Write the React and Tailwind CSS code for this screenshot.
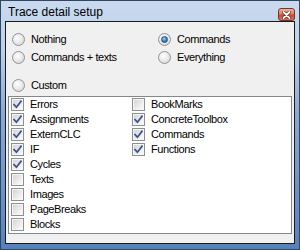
import React from "react";

const font = { fontFamily: '"Liberation Sans", Arial, sans-serif' };

function Check({ checked }) {
  return (
    <span className="w-[13px] h-[13px] shrink-0 border border-[#8e8f8f] bg-white flex items-center justify-center">
      <span className="w-[11px] h-[11px] border border-[#f6f6f6] bg-[linear-gradient(135deg,#d4d4d4_0%,#ececec_60%,#fafafa_100%)] flex items-center justify-center">
        {checked && (
          <svg width="9" height="9" viewBox="0 0 9 9">
            <path d="M1 4.6 L3.4 7.2 L8 1.3" fill="none" stroke="#3c5390" strokeWidth="1.7" strokeLinecap="square" />
          </svg>
        )}
      </span>
    </span>
  );
}

function Radio({ checked }) {
  return (
    <span className="w-[13px] h-[13px] shrink-0 rounded-full border border-[#929292] bg-[radial-gradient(circle_at_40%_35%,#ffffff_0%,#e9e9e9_50%,#cfcfcf_100%)] flex items-center justify-center">
      {checked && (
        <span className="w-[7px] h-[7px] rounded-full border border-[#254f7e] bg-[radial-gradient(circle_at_40%_35%,#a7d6f7_0%,#3a86c8_50%,#1a4f86_100%)]" />
      )}
    </span>
  );
}

function RadioItem({ label, checked }) {
  return (
    <div className="h-[18px] flex items-center gap-[6px]">
      <Radio checked={checked} />
      <span className="text-[11px] tracking-[-0.4px] text-black leading-none">{label}</span>
    </div>
  );
}

function CheckItem({ label, checked }) {
  return (
    <div className="h-[15px] flex items-center gap-[6px]">
      <Check checked={checked} />
      <span className="text-[11px] tracking-[-0.4px] text-black leading-none">{label}</span>
    </div>
  );
}

export default function App() {
  const col1 = [
    ["Errors", true],
    ["Assignments", true],
    ["ExternCLC", true],
    ["IF", true],
    ["Cycles", true],
    ["Texts", false],
    ["Images", false],
    ["PageBreaks", false],
    ["Blocks", false],
  ];
  const col2 = [
    ["BookMarks", false],
    ["ConcreteToolbox", true],
    ["Commands", true],
    ["Functions", true],
  ];
  return (
    <div
      style={font}
      className="w-[300px] h-[250px] border border-[#33465e] px-[4px] pb-[5px] flex flex-col bg-[linear-gradient(to_bottom,#c9daf0_0%,#bcd0ea_20%,#8aaad6_45%,#5582bc_100%)]"
    >
      <div className="h-[20px] flex items-start justify-between shrink-0">
        <span className="pl-[3px] pt-[4px] text-[12px] leading-[14px] text-black">Trace detail setup</span>
        <div className="mt-[7px] w-[17px] h-[13px] rounded-[3px] border border-[#7d3324] bg-[linear-gradient(to_bottom,#eab3a3_0%,#d9806b_45%,#c5492f_55%,#d8725a_100%)] flex items-center justify-center">
          <svg width="9" height="8" viewBox="0 0 9 8">
            <path d="M1.5 1 L7.5 7 M7.5 1 L1.5 7" stroke="#5a2318" strokeWidth="3.2" strokeLinecap="round" />
            <path d="M1.5 1 L7.5 7 M7.5 1 L1.5 7" stroke="#ffffff" strokeWidth="1.8" strokeLinecap="round" />
          </svg>
        </div>
      </div>
      <div className="flex-1 border border-[#1a1a1a] bg-[#f0f0f0] flex flex-col">
        <div className="h-[74px] shrink-0 pt-[8px] pl-[6px]">
          <div className="flex">
            <div className="w-[146px] flex flex-col">
              <RadioItem label="Nothing" />
              <RadioItem label="Commands + texts" />
            </div>
            <div className="flex flex-col">
              <RadioItem label="Commands" checked />
              <RadioItem label="Everything" />
            </div>
          </div>
          <div className="mt-[10px]">
            <RadioItem label="Custom" />
          </div>
        </div>
        <div className="h-[138px] shrink-0 mx-[2px] border border-[#828790] bg-white flex pl-[2px]">
          <div className="w-[121px] flex flex-col">
            {col1.map(([l, c]) => (
              <CheckItem key={l} label={l} checked={c} />
            ))}
          </div>
          <div className="flex flex-col">
            {col2.map(([l, c]) => (
              <CheckItem key={l} label={l} checked={c} />
            ))}
          </div>
        </div>
      </div>
    </div>
  );
}
